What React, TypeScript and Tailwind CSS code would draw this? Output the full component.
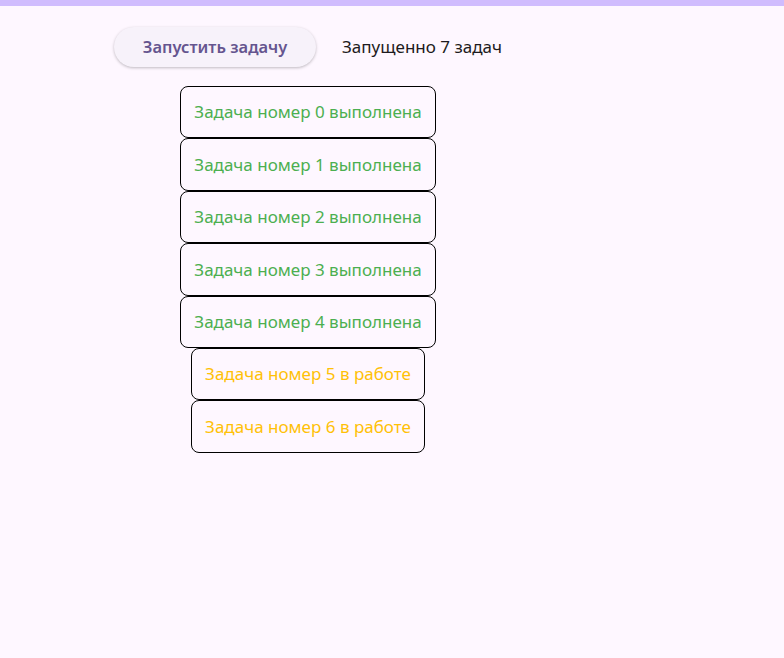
import React from "react";

const tasks = [
  { n: 0, done: true },
  { n: 1, done: true },
  { n: 2, done: true },
  { n: 3, done: true },
  { n: 4, done: true },
  { n: 5, done: false },
  { n: 6, done: false },
];

export default function App() {
  return (
    <div
      className="min-h-[658px] w-full bg-[#fef7ff]"
      style={{ fontFamily: '"Noto Sans", "Open Sans", sans-serif' }}
    >
      <div className="h-[6px] w-full bg-[#d0bcfe]" />
      <div className="flex w-[616px] flex-col items-center pt-[21px]">
        <div className="flex items-center gap-[26px]">
          <button className="h-[40px] w-[202px] rounded-full bg-[#f7f2fa] text-[16.5px] font-semibold text-[#65558f] shadow-[0_1px_3px_rgba(0,0,0,0.25)]">
            Запустить задачу
          </button>
          <span className="text-[17px] text-[#1d1b20]">Запущенно 7 задач</span>
        </div>
        <div className="mt-[19px] flex flex-col items-center">
          {tasks.map((t) => (
            <div
              key={t.n}
              className={`flex h-[52.4px] items-center rounded-[8px] border border-black px-[13px] text-[17px] ${
                t.done ? "text-[#4caf50]" : "text-[#ffc107]"
              }`}
            >
              {t.done
                ? `Задача номер ${t.n} выполнена`
                : `Задача номер ${t.n} в работе`}
            </div>
          ))}
        </div>
      </div>
    </div>
  );
}
